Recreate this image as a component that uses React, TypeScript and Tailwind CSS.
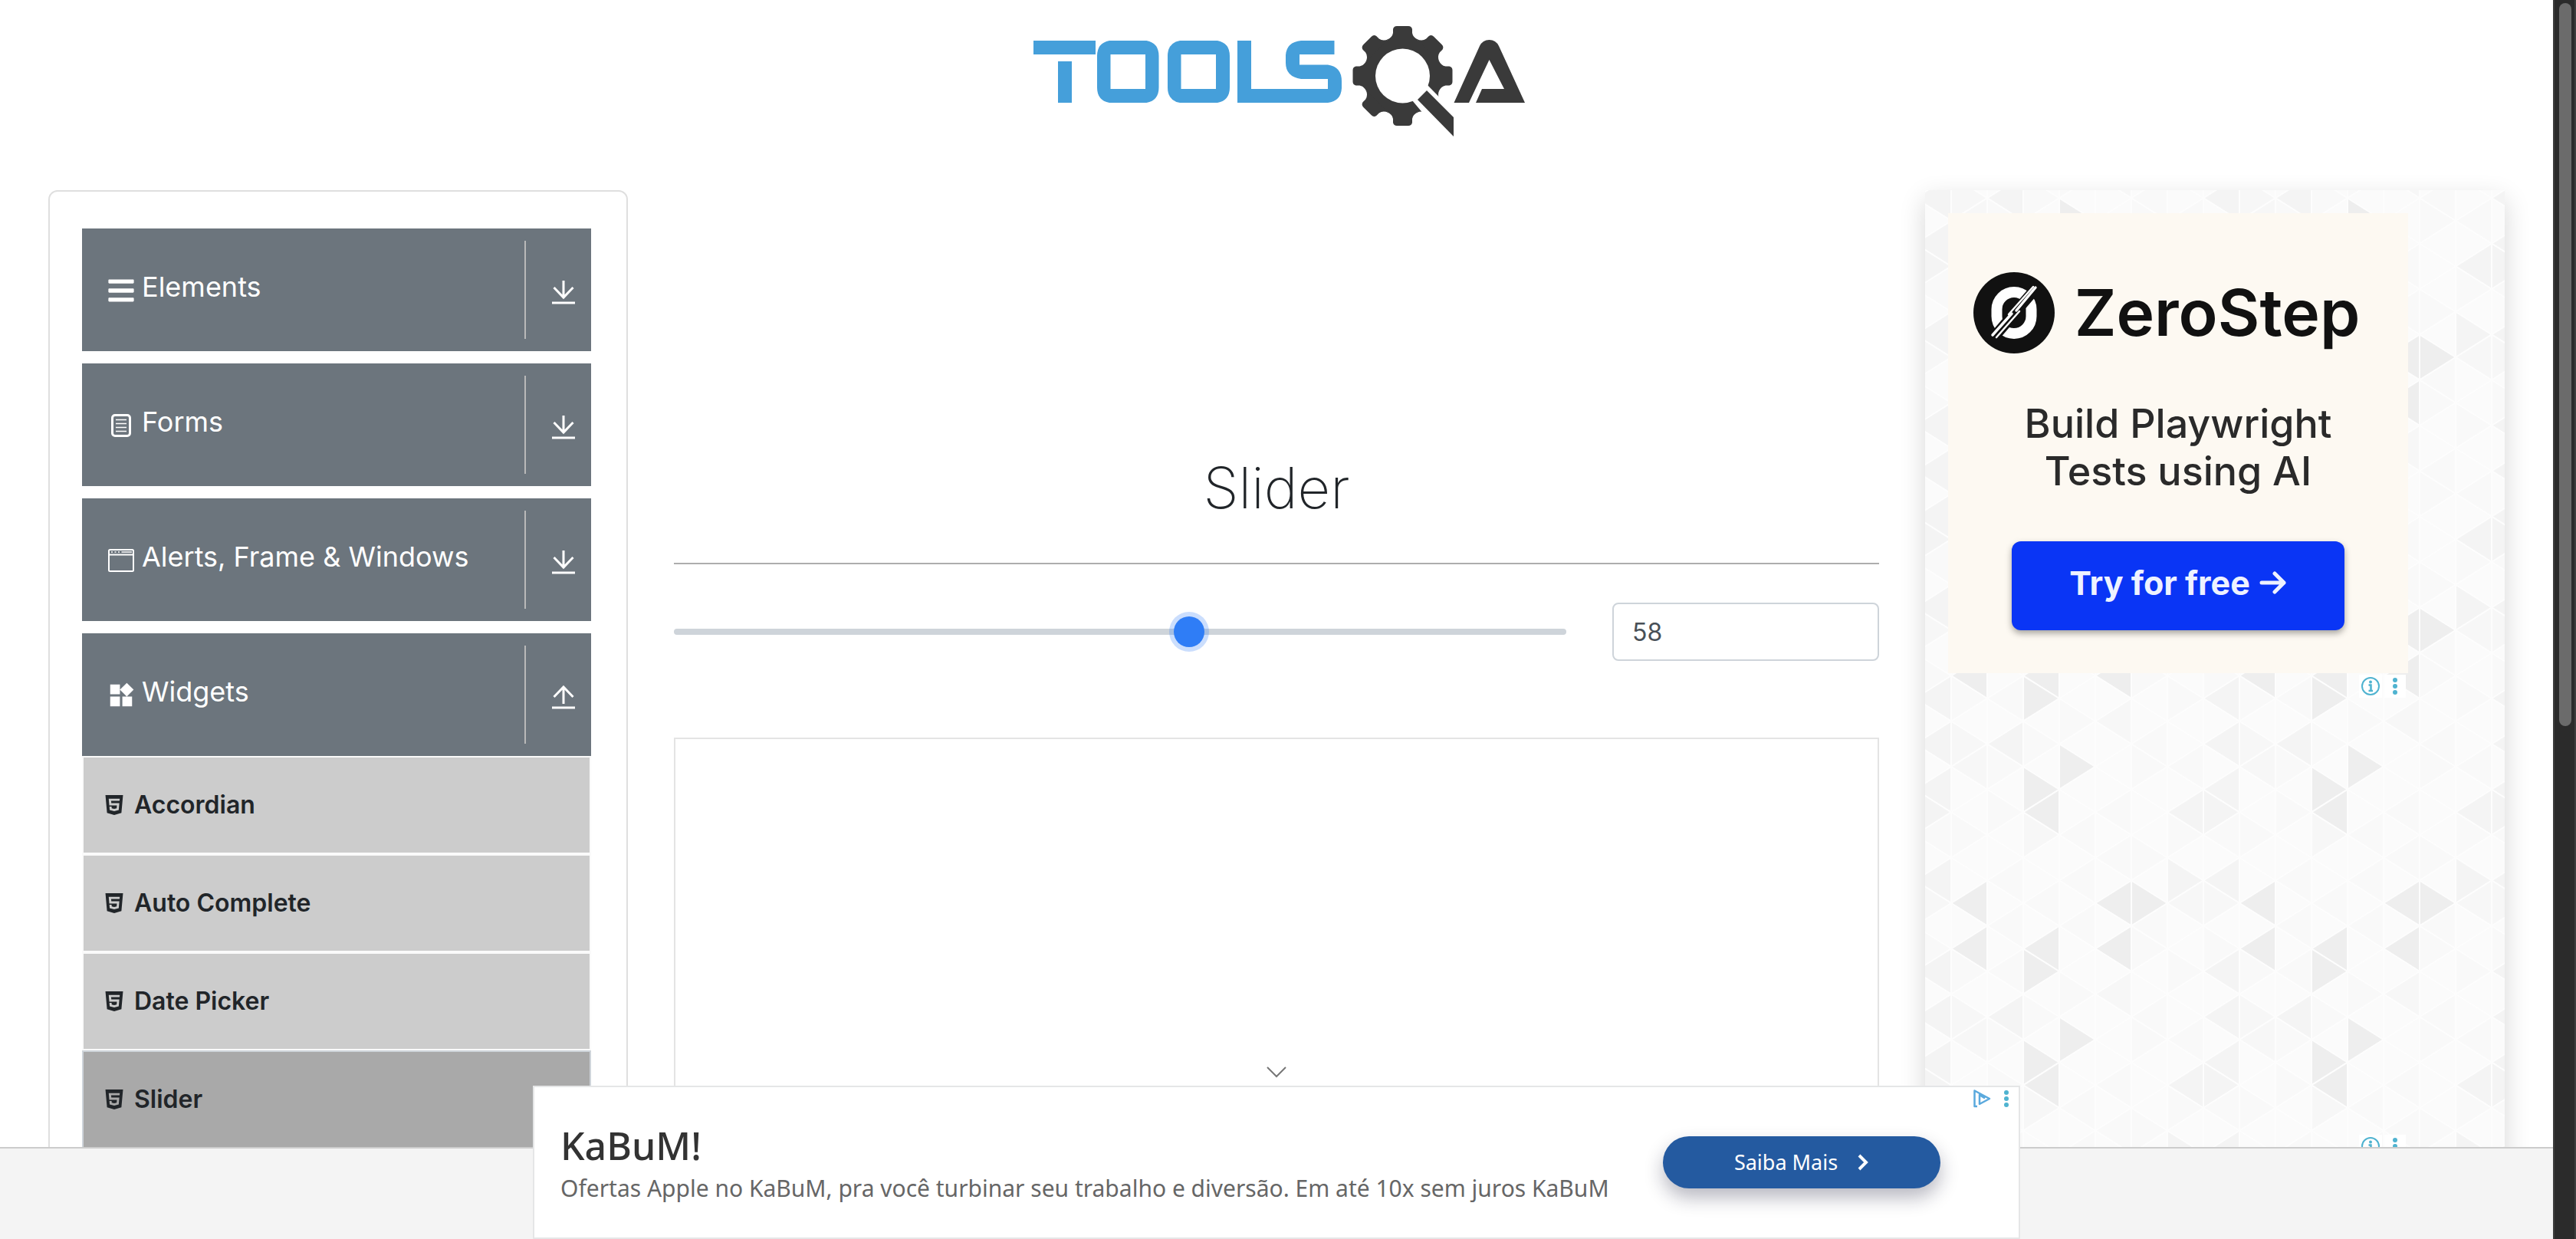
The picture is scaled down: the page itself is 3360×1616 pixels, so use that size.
import { useState, type ReactNode } from "react";
import { FaBars } from "react-icons/fa";
import { MdWidgets } from "react-icons/md";
import { AiFillHtml5 } from "react-icons/ai";

function ToolsQaLogo() {
  const teeth = [0, 45, 90, 135, 180, 225, 270, 315];
  return (
    <svg role="img" aria-label="TOOLSQA" viewBox="15 20 660 150" className="h-[150px] w-[660px]">
      <g fill="#459fda">
        <rect x="28" y="43" width="81" height="18" />
        <rect x="60" y="70" width="18" height="54" />
        <path
          fillRule="evenodd"
          d="M127 43H175.500Q191.500 46 191.500 63V104Q191.500 121 175.500 124H127Q111 121 111 104V63Q111 46 127 43ZM128.500 61V106H174V61Z"
        />
        <path
          fillRule="evenodd"
          d="M219 43H268Q284 46 284 63V104Q284 121 268 124H219Q203 121 203 104V63Q203 46 219 43ZM220.500 61V106H266V61Z"
        />
        <path d="M294 43H312V106H412V93H377Q357 90 357 72V62Q358 45 377 43H420.500V61H375V74.500H412Q430 77 430 96V105Q429 122 412 124H294Z" />
      </g>
      <g fill="#3a3a3a">
        <circle cx="509.500" cy="89" r="51" />
        {teeth.map((a) => (
          <path
            key={a}
            transform={`rotate(${a} 509.500 89)`}
            d="M489 42Q496 39 497 33V28Q498 24 502 24H517Q521 24 522 28V33Q523 39 530 42Z"
          />
        ))}
      </g>
      <circle cx="509.500" cy="89" r="35.500" fill="#fff" />
      <path d="M522 121L548 152L580 155L590 150L541 100L530 112Z" fill="#fff" />
      <path d="M541 108L576 143V168L529 120Z" fill="#3a3a3a" />
      <path
        d="M576.500 124L610 50Q614 42 622.500 42Q631 42 635 50L669 124H605L613 106H642L622.500 68L596 124Z"
        fill="#3a3a3a"
      />
    </svg>
  );
}

function FormIcon() {
  return (
    <svg viewBox="0 0 34 34" className="h-[34px] w-[34px]" fill="none" stroke="currentColor" aria-hidden="true">
      <rect x="5.500" y="3.500" width="23" height="27" rx="3.500" strokeWidth="3" />
      <path d="M10 9.500H24M10 14.500H24M10 19.500H24M10 24.500H24" strokeWidth="1.600" />
    </svg>
  );
}

function WindowIcon() {
  return (
    <svg viewBox="0 0 34 34" className="h-[34px] w-[34px]" fill="none" stroke="currentColor" aria-hidden="true">
      <rect x="1" y="3" width="32" height="28" rx="1.500" strokeWidth="2" />
      <path d="M1 9.500H33" strokeWidth="2" />
      <path d="M4 6H6M8.500 6H10.500M13 6H15M17.500 6H31" strokeWidth="1.600" />
    </svg>
  );
}

function ArrowIcon({ up }: { up?: boolean }) {
  return (
    <svg viewBox="0 0 30 32" className="h-8 w-[30px]" fill="none" stroke="currentColor" aria-hidden="true">
      <path
        d={up ? "M15 24V3M2.500 15L15 2L27.500 15" : "M15 0V22M2.500 9L15 22L27.500 9"}
        strokeWidth="3"
      />
      <path d="M0 29H30" strokeWidth="3" />
    </svg>
  );
}

type Group = { label: string; icon: ReactNode; open?: boolean; items?: string[] };

const groups: Group[] = [
  { label: "Elements", icon: <FaBars className="h-[38px] w-[34px]" /> },
  { label: "Forms", icon: <FormIcon /> },
  { label: "Alerts, Frame & Windows", icon: <WindowIcon /> },
  {
    label: "Widgets",
    icon: <MdWidgets className="h-[38px] w-[38px]" />,
    open: true,
    items: ["Accordian", "Auto Complete", "Date Picker", "Slider", "Progress Bar"],
  },
];

function Sidebar() {
  return (
    <nav className="flex flex-col gap-4 rounded-xl border-2 border-[#dfdfdf] px-[42px] pt-12">
      {groups.map((g) => (
        <div key={g.label} className="pr-1">
          <button
            type="button"
            aria-expanded={!!g.open}
            className="flex h-40 w-full items-center bg-[#6c757d] pl-8 text-left text-white"
          >
            <span className="flex w-[38px] justify-center pt-[2px]">{g.icon}</span>
            <span className="flex-1 pb-2 pl-2 text-[36px] leading-[48px]">{g.label}</span>
            <span className="h-32 w-[2px] bg-[#b9b9b9]" />
            <span className="flex w-[85px] justify-center pt-2 pl-3">
              <ArrowIcon up={g.open} />
            </span>
          </button>
          {g.items && (
            <ul>
              {g.items.map((item) => (
                <li key={item}>
                  <a
                    href="#"
                    className={
                      item === "Slider"
                        ? "flex h-32 items-center border-2 border-[#ced4da] bg-[#a9a9a9] pl-6 text-[#212529]"
                        : "flex h-32 items-center border-2 border-[#fafafa] bg-[#ccc] pl-6 text-[#212529]"
                    }
                  >
                    <AiFillHtml5 className="h-8 w-8" />
                    <span className="pl-[10px] text-[32px] leading-[48px] font-semibold">{item}</span>
                  </a>
                </li>
              ))}
            </ul>
          )}
        </div>
      ))}
    </nav>
  );
}

function SliderDemo() {
  const [value, setValue] = useState(58);
  return (
    <main className="col-span-2 flex flex-col">
      <h1 className="mt-[340px] text-center text-[74px] leading-[96px] font-extralight text-[#212529]">
        Slider
      </h1>
      <hr className="mt-[50px] border-t-2 border-[#adadad]" />
      <div className="mt-[50px] flex items-center gap-[60px]">
        <input
          type="range"
          aria-label="Slider"
          min={0}
          max={100}
          value={value}
          onChange={(e) => setValue(Number(e.target.value))}
          className="h-[52px] min-w-0 flex-1 appearance-none bg-transparent [&::-webkit-slider-runnable-track]:h-2 [&::-webkit-slider-runnable-track]:rounded-full [&::-webkit-slider-runnable-track]:bg-[#ced4da] [&::-webkit-slider-thumb]:-mt-4 [&::-webkit-slider-thumb]:h-10 [&::-webkit-slider-thumb]:w-10 [&::-webkit-slider-thumb]:appearance-none [&::-webkit-slider-thumb]:rounded-full [&::-webkit-slider-thumb]:bg-[#2f7df6] [&::-webkit-slider-thumb]:shadow-[0_0_0_6px_rgba(47,125,246,0.25)]"
        />
        <input
          type="text"
          aria-label="Slider value"
          value={value}
          onChange={(e) => setValue(Number(e.target.value) || 0)}
          className="h-[76px] w-[348px] rounded-lg border-2 border-[#ced4da] bg-white px-6 text-[32px] text-[#495057]"
        />
      </div>
      <div className="mt-[100px] h-[900px] border-2 border-[#e4e4e4]" />
    </main>
  );
}

/* Base shade of each triangle: eight columns by twelve half-row steps. */
const shades = [
  "311211211213",
  "212112121212",
  "131311213312",
  "311212121121",
  "112121312131",
  "211121322112",
  "213211311211",
  "133211312313",
];
/* Darker accents, keyed by "column,step". */
const accents: Record<string, number> = {
  "3,0": 5, "2,1": 5, "2,2": 5, "6,2": 4, "7,2": 4, "7,1": 4, "0,6": 5, "4,6": 5, "5,6": 5,
  "6,5": 4, "7,5": 4, "0,8": 5, "2,8": 5, "4,8": 5, "2,9": 5, "7,9": 4, "1,11": 4, "7,11": 4,
};
const tones = ["#fcfcfc", "#fbfbfb", "#f9f9f9", "#f7f7f7", "#f4f4f4", "#eeeeee"];
const COL = 47;
const HALF = 356 / 12;

function TrianglePattern() {
  const shapes: ReactNode[] = [];
  for (let c = -1; c <= 8; c++) {
    for (let h = -1; h <= 12; h++) {
      const cc = (c + 8) % 8;
      const hh = (h + 12) % 12;
      const tone = tones[accents[`${cc},${hh}`] ?? Number(shades[cc][hh])];
      const left = (cc + hh) % 2 === 0;
      const x0 = c * COL;
      const x1 = x0 + COL;
      const y = h * HALF;
      const pts = left
        ? `${x0},${y} ${x1},${y - HALF} ${x1},${y + HALF}`
        : `${x1},${y} ${x0},${y - HALF} ${x0},${y + HALF}`;
      shapes.push(
        <polygon key={`${c},${h}`} points={pts} fill={tone} stroke="#fdfdfd" strokeWidth="2" strokeLinejoin="round" />,
      );
    }
  }
  return (
    <svg className="absolute inset-0 h-full w-full" aria-hidden="true">
      <defs>
        <pattern id="tri" width="376" height="356" patternUnits="userSpaceOnUse" patternTransform="translate(34 40)">
          {shapes}
        </pattern>
      </defs>
      <rect width="100%" height="100%" fill="url(#tri)" />
    </svg>
  );
}

function Dots() {
  return (
    <svg viewBox="0 0 8 24" className="h-6 w-2" fill="#4fb3d0" aria-hidden="true">
      <circle cx="4" cy="4" r="3" />
      <circle cx="4" cy="12" r="3" />
      <circle cx="4" cy="20" r="3" />
    </svg>
  );
}

function AdChoices() {
  return (
    <div className="absolute top-full right-[3px] mt-[2px] flex gap-[3px]">
      <button type="button" aria-label="Ad information" className="flex h-[30px] w-[30px] items-center justify-center bg-white">
        <svg viewBox="0 0 26 26" className="h-[26px] w-[26px]" fill="none" stroke="#4fb3d0" aria-hidden="true">
          <circle cx="13" cy="13" r="11" strokeWidth="2" />
          <circle cx="13" cy="7.500" r="2" fill="#4fb3d0" stroke="none" />
          <path d="M10.500 11.500H13.500V19M10.500 19H16" strokeWidth="2.500" />
        </svg>
      </button>
      <button type="button" aria-label="Ad options" className="flex h-[30px] w-[28px] items-center justify-center bg-white">
        <Dots />
      </button>
    </div>
  );
}

function ZeroStepMark() {
  return (
    <svg viewBox="0 0 106 106" className="h-[106px] w-[106px]" aria-hidden="true">
      <circle cx="53" cy="53" r="53" fill="#111" />
      <rect x="30.500" y="26" width="45" height="54" rx="22.500" fill="none" stroke="#fff" strokeWidth="14" />
      <path d="M24 88L84 18" stroke="#111" strokeWidth="14" />
      <path d="M25 82L50 54M56 50L81 20" stroke="#fff" strokeWidth="3.500" strokeLinecap="round" />
      <path d="M30 85L60 51M46 55L78 19" stroke="#fff" strokeWidth="2.500" strokeLinecap="round" />
    </svg>
  );
}

function AdColumn() {
  return (
    <aside className="relative px-[30px] pt-[30px] shadow-[0_12px_32px_rgba(0,0,0,0.16)]">
      <TrianglePattern />
      <section aria-label="ZeroStep" className="relative flex h-[600px] w-[600px] flex-col items-center bg-[#fdf9f2] pt-[76px]">
        <div className="flex items-center gap-[26px] pr-[30px]">
          <ZeroStepMark />
          <span className="text-[84px] leading-[108px] font-semibold text-[#111]">ZeroStep</span>
        </div>
        <p className="mt-[60px] text-center text-[52px] leading-[62px] font-medium text-[#2a2a2a]">
          Build Playwright
          <br />
          Tests using AI
        </p>
        <button
          type="button"
          className="mt-[60px] flex h-[116px] w-[434px] items-center justify-center gap-3 rounded-xl bg-[#0a35f5] pb-2 text-[43px] font-bold text-[#eef2ff] shadow-[0_4px_8px_rgba(0,0,0,0.35)]"
        >
          Try for free
          <svg viewBox="0 0 36 32" className="h-8 w-9" fill="none" stroke="currentColor" strokeWidth="5" strokeLinecap="round" strokeLinejoin="round" aria-hidden="true">
            <path d="M3 16H32M20 4L32 16L20 28" />
          </svg>
        </button>
        <AdChoices />
      </section>
      <section aria-label="Advertisement" className="relative h-[600px] w-[600px]">
        <AdChoices />
      </section>
    </aside>
  );
}

function BottomBanner() {
  return (
    <footer className="absolute inset-x-0 bottom-0 h-[120px] border-t-2 border-[#ccc] bg-[#f4f4f4]">
      <div className="absolute bottom-0 left-1/2 flex h-[200px] w-[1940px] -translate-x-1/2 items-center border-2 border-[#e5e6e7] bg-white pl-[34px] font-['Noto_Sans',sans-serif]">
        <button type="button" aria-label="Collapse advertisement" className="absolute bottom-full left-1/2 mb-3 -translate-x-1/2">
          <svg viewBox="0 0 28 16" className="h-4 w-7" fill="none" stroke="#777" strokeWidth="2" aria-hidden="true">
            <path d="M2 2L14 14L26 2" />
          </svg>
        </button>
        <div className="flex-1">
          <p className="text-[50px] leading-[68px] font-medium text-[#333]">KaBuM!</p>
          <p className="text-[30px] leading-[44px] text-[#666]">
            Ofertas Apple no KaBuM, pra você turbinar seu trabalho e diversão. Em até 10x sem juros KaBuM
          </p>
        </div>
        <button
          type="button"
          className="mr-[102px] flex h-[68px] w-[362px] items-center justify-center gap-[25px] rounded-full bg-[#245aa0] text-[27px] text-white shadow-[0_12px_24px_rgba(20,20,50,0.3)]"
        >
          Saiba Mais
          <svg viewBox="0 0 16 22" className="h-[22px] w-4" fill="none" stroke="currentColor" strokeWidth="4" aria-hidden="true">
            <path d="M3 2L12 11L3 20" />
          </svg>
        </button>
        <div className="absolute top-[2px] right-3 flex items-center gap-4">
          <svg viewBox="0 0 24 26" className="h-[26px] w-6" fill="none" stroke="#5aa9dd" strokeWidth="2.500" strokeLinejoin="round" aria-hidden="true">
            <path d="M6 23H2.500V2.500L22 13L9 20V8L16 12.500" />
          </svg>
          <Dots />
        </div>
      </div>
    </footer>
  );
}

export default function App() {
  return (
    <div className="flex h-screen overflow-hidden bg-white font-[Inter,sans-serif]">
      <div className="relative h-full min-w-0 flex-1 overflow-hidden">
        <header className="flex justify-center pt-[30px] pb-[68px]">
          <a href="#">
            <ToolsQaLogo />
          </a>
        </header>
        <div className="grid grid-cols-4 gap-[60px] px-[63px]">
          <Sidebar />
          <SliderDemo />
          <AdColumn />
        </div>
        <BottomBanner />
      </div>
      <div className="w-[30px] border-x-2 border-[#3d3d3d] bg-[#2b2b2b] px-[6px] pt-1">
        <div className="h-[943px] w-4 rounded-full bg-[#6b6b6b]" />
      </div>
    </div>
  );
}
